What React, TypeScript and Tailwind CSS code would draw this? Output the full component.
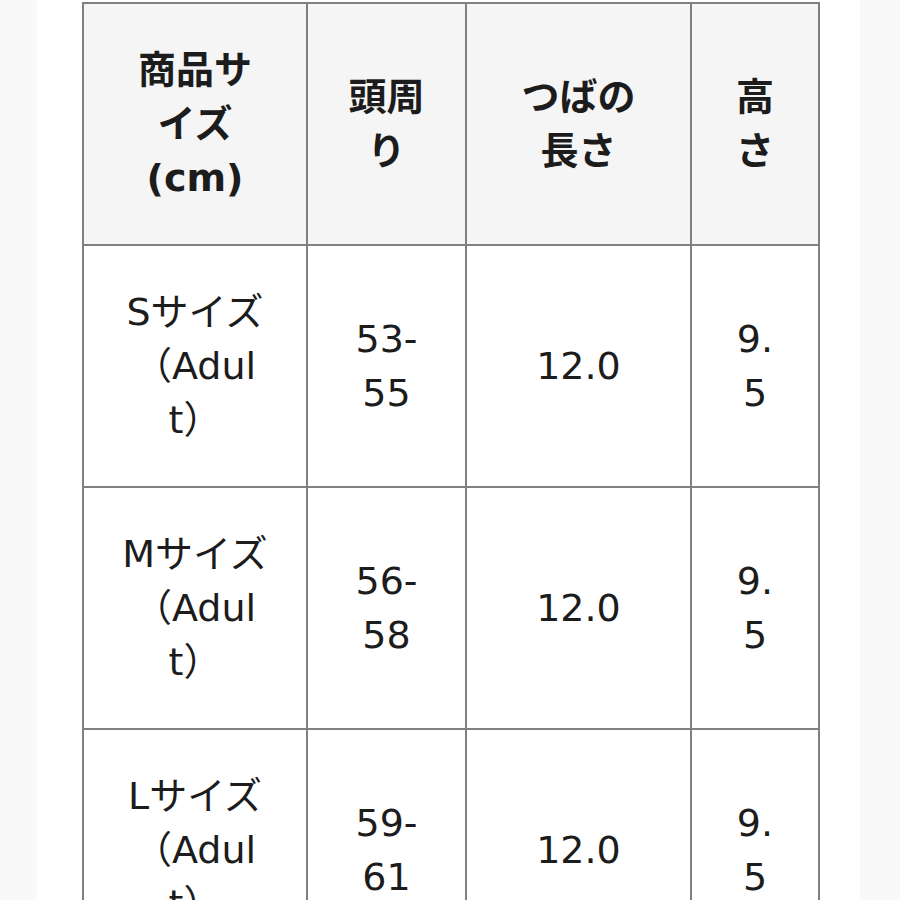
const rows = [
  { size: ['Sサイズ', '（Adul', 't）'], head: ['53-', '55'], brim: '12.0', height: ['9.', '5'] },
  { size: ['Mサイズ', '（Adul', 't）'], head: ['56-', '58'], brim: '12.0', height: ['9.', '5'] },
  { size: ['Lサイズ', '（Adul', 't）'], head: ['59-', '61'], brim: '12.0', height: ['9.', '5'] },
];

function Lines({ lines }: { lines: string[] }) {
  return (
    <>
      {lines.map((l, i) => (
        <div key={i}>{l}</div>
      ))}
    </>
  );
}

export default function App() {
  return (
    <div className="h-[900px] overflow-hidden bg-[#f9f9f9] pl-[37px] pr-[40px] font-['DejaVu_Sans',_'Noto_Sans_CJK_JP',_sans-serif] text-[#1c1c1c]">
      <div className="h-full bg-white pt-[2px] pl-[45px]">
        <table className="table-fixed border-collapse border-2 border-[#808080] text-center text-[38px] leading-[54px]">
          <colgroup>
            <col className="w-[224px]" />
            <col className="w-[159px]" />
            <col className="w-[225px]" />
            <col className="w-[128px]" />
          </colgroup>
          <thead>
            <tr className="h-[242px] bg-[#f5f5f5] font-bold">
              <th className="border-2 border-[#808080] align-middle">
                <Lines lines={['商品サ', 'イズ', '(cm)']} />
              </th>
              <th className="border-2 border-[#808080] align-middle">
                <Lines lines={['頭周', 'り']} />
              </th>
              <th className="border-2 border-[#808080] align-middle">
                <Lines lines={['つばの', '長さ']} />
              </th>
              <th className="border-2 border-[#808080] align-middle">
                <Lines lines={['高', 'さ']} />
              </th>
            </tr>
          </thead>
          <tbody>
            {rows.map((r, i) => (
              <tr key={i} className="h-[242px]">
                <td className="border-2 border-[#808080] align-middle">
                  <Lines lines={r.size} />
                </td>
                <td className="border-2 border-[#808080] align-middle">
                  <Lines lines={r.head} />
                </td>
                <td className="border-2 border-[#808080] align-middle">{r.brim}</td>
                <td className="border-2 border-[#808080] align-middle">
                  <Lines lines={r.height} />
                </td>
              </tr>
            ))}
          </tbody>
        </table>
      </div>
    </div>
  );
}
